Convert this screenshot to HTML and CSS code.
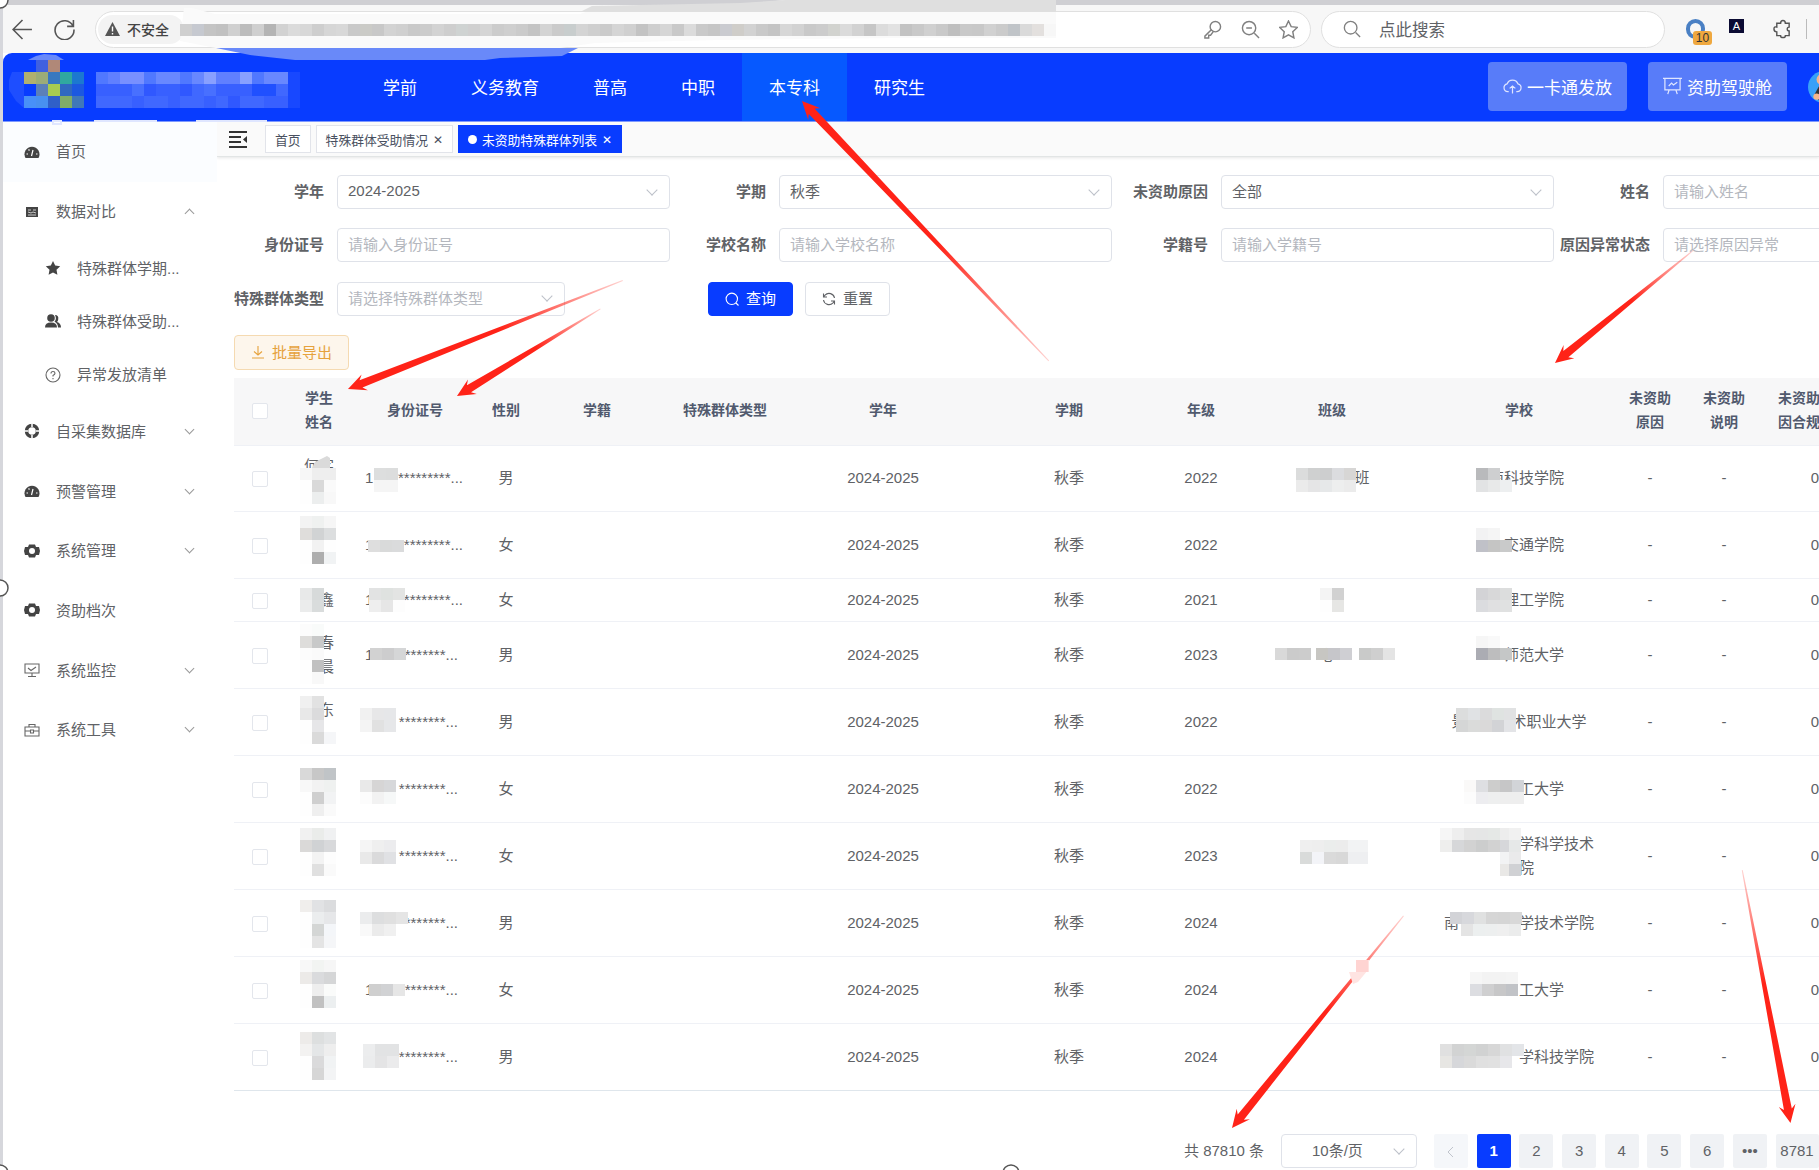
FILE: index.html
```
<!DOCTYPE html>
<html lang="zh-CN">
    <head>
        <meta charset="UTF-8" />
        <meta name="viewport" content="width=device-width, initial-scale=1.0" />
        <title>未资助特殊群体列表</title>
        <link rel="stylesheet" href="styles.css">
    </head>
    <body>
        <div class="browser">
            <svg class="navIcon back" viewBox="0 0 20 20"><path d="M19 10H1M10 1L1 10l9 9" /></svg>
            <svg class="navIcon reload" viewBox="0 0 20 20"><path d="M18 6.5A9 9 0 1 0 19 10M18.5 1v6h-6" /></svg>
            <div class="address">
                <span class="unsafe">
                    <svg width="15" height="14" viewBox="0 0 15 14"><path d="M7.5 0L15 14H0z" fill="#555" /><path d="M7.5 4.5v5M7.5 11v1.5" stroke="#fff" stroke-width="1.4" /></svg>
                    不安全
                </span>
                <div class="addressIcons">
                    <svg viewBox="0 0 20 20"><circle cx="13" cy="7" r="5.5" /><path d="M9 10l-7 7v2h4v-3h2l3-4" /></svg>
                    <svg viewBox="0 0 20 20"><circle cx="8.5" cy="8.5" r="7" /><path d="M14 14l5 5M5.5 8.5h6" /></svg>
                    <svg viewBox="0 0 20 20"><path d="M10 1l2.8 6 6.4.8-4.7 4.5 1.2 6.5L10 15.6l-5.7 3.2 1.2-6.5L.8 7.8 7.2 7z" /></svg>
                </div>
            </div>
            <div class="searchBox">
                <svg viewBox="0 0 20 20"><circle cx="8.5" cy="8.5" r="7" /><path d="M14 14l5 5" /></svg>
                点此搜索
            </div>
            <div class="extensions">
                <div class="ext extRing"><span class="badge">10</span></div>
                <div class="ext extDark">A</div>
                <svg class="ext" viewBox="0 0 20 20"><path d="M4 4h4q0-3 2.500-3T13 4h4v4q-2 0-2 2t2 2v5h-4q0 2-2.500 2T8 17H4v-4q-3 0-3-3t3-2z" /></svg>
                <span class="line"></span>
            </div>
        </div>

        <div class="header">
            <div class="nav">
                <a>学前</a><a>义务教育</a><a>普高</a><a>中职</a><a class="current">本专科</a><a>研究生</a>
            </div>
            <div class="headerBtns">
                <button class="headBtn">
                    <svg viewBox="0 0 20 18"><path d="M6 15H5a4.2 4.2 0 0 1-.6-8.3 6 6 0 0 1 11.3 0A4.2 4.2 0 0 1 15 15h-1M10 17V9M7 11.5L10 9l3 2.5" /></svg>一卡通发放
                </button>
                <button class="headBtn">
                    <svg viewBox="0 0 20 18"><path d="M0 1h20M2 1v12h16V1M6 9l3-3 2 2 4-3M6.5 13L5 17.5M13.5 13l1.5 4.5" /></svg>资助驾驶舱
                </button>
                <svg class="avatar" viewBox="0 0 30 30"><circle cx="15" cy="15" r="15" fill="#38a0f8" /><circle cx="13" cy="8" r="5" fill="#f5b58c" /><path d="M6 22l5-9h10v17h-9z" fill="#333" /><circle cx="8" cy="24" r="3" fill="#f5b58c" /></svg>
            </div>
        </div>

        <div class="container">
            <div class="sidebar" id="sidebar"></div>
            <div class="main">
                <div class="tagBar">
                    <svg class="fold" viewBox="0 0 18 17"><path d="M0 1h18M0 6h12M0 11h12M0 16h18" stroke="#333" stroke-width="2" /><path d="M18 5v7l-4-3.5z" fill="#333" /></svg>
                    <span class="tag">首页</span>
                    <span class="tag">特殊群体受助情况<i>✕</i></span>
                    <span class="tag on"><b></b>未资助特殊群体列表<i>✕</i></span>
                </div>
                <div class="content">
                    <div class="formRow">
                        <label>学年</label><div class="input select filled">2024-2025</div>
                        <label>学期</label><div class="input select filled">秋季</div>
                        <label>未资助原因</label><div class="input select filled">全部</div>
                        <label>姓名</label><div class="input">请输入姓名</div>
                    </div>
                    <div class="formRow">
                        <label>身份证号</label><div class="input">请输入身份证号</div>
                        <label>学校名称</label><div class="input">请输入学校名称</div>
                        <label>学籍号</label><div class="input">请输入学籍号</div>
                        <label>原因异常状态</label><div class="input">请选择原因异常</div>
                    </div>
                    <div class="formRow">
                        <label>特殊群体类型</label><div class="input select short">请选择特殊群体类型</div>
                        <button class="btn primary"><svg viewBox="0 0 14 14"><path d="M11 11l2.5 2.5M12.5 6.800a5.700 5.700 0 1 0-11.400 0 5.700 5.700 0 0 0 11.400 0z" /></svg>查询</button>
                        <button class="btn"><svg viewBox="0 0 14 14"><path d="M12.5 6A5.5 5.5 0 0 0 3 3.2L1.5 5M1.5 1.5V5H5M1.5 8A5.5 5.5 0 0 0 11 10.8L12.5 9M12.5 12.5V9H9" /></svg>重置</button>
                    </div>
                    <button class="btn export"><svg viewBox="0 0 14 14"><path d="M7 1v9M3 6.5L7 10l4-3.5M1 13h12" /></svg>批量导出</button>

                    <table>
                        <colgroup>
                            <col class="c52"><col class="c66"><col class="c126"><col class="c56"><col class="c126"><col class="c130"><col class="c186"><col class="c186"><col class="c78"><col class="c184"><col class="c190"><col class="c72"><col class="c76"><col class="c106">
                        </colgroup>
                        <thead>
                            <tr>
                                <th><span class="check"></span></th><th>学生<br>姓名</th><th>身份证号</th><th>性别</th><th>学籍</th><th>特殊群体类型</th><th>学年</th><th>学期</th><th>年级</th><th>班级</th><th>学校</th><th>未资助<br>原因</th><th>未资助<br>说明</th><th class="cut">未资助<br>因合规</th>
                            </tr>
                        </thead>
                        <tbody id="rows"></tbody>
                    </table>

                    <div class="pager">
                        <span class="total">共 87810 条</span>
                        <div class="input select size">10条/页</div>
                        <span class="page prev"><svg viewBox="0 0 14 14"><path d="M9 2L4 7l5 5" /></svg></span>
                        <span class="page now">1</span>
                        <span class="page">2</span>
                        <span class="page">3</span>
                        <span class="page">4</span>
                        <span class="page">5</span>
                        <span class="page">6</span>
                        <span class="page">•••</span>
                        <span class="page">8781</span>
                    </div>
                </div>
            </div>
        </div>

        <svg class="marks" id="marks" viewBox="0 0 1819 1170">
            <polygon points="184,8 192,8 215,14 580,14 605,5 740,5 785,0 1056,0 1056,38 900,38 720,40 595,43 560,48 216,48 180,41" fill="#fafafa" />
            <polygon points="592,6 740,3 785,0 1056,0 1056,12 580,12" fill="#dfdfdf" />
            <polygon points="216,48 578,48 562,56 500,58 485,60 295,60 250,55" fill="#6989f9" />
            <polygon points="28,60 36,56 44,54 56,55 64,60" fill="#6989f9" />
            <polygon points="12,72 24,72 24,108 16,101 9,90 9,80" fill="#1e4eff" />
            <path d="M53 121h8v3h-8zM94 121h63M196 121h71" stroke="#dfe6ff" stroke-width="2" />
        </svg>

        <script>
            const icons = {
                gauge: '<path d="M1.500 14A7.500 7.500 0 1 1 14.500 14z" fill="#444"/><path d="M7.500 12l1.500-6M2.500 10H4M12 10h1.500M4.500 5.500l1 1" stroke="#fff" stroke-width="1.200"/>',
                form: '<path d="M2 3h12v10H2z" fill="#444"/><path d="M4 6h3M9 6h3M4 8l3 1 2-1 3 1M4 11h8" stroke="#ccc"/>',
                star: '<path d="M8 1l2.2 4.6 5 .7-3.7 3.5.9 5L8 12.4l-4.4 2.4.9-5L.8 6.3l5-.7z" fill="#444"/>',
                people: '<circle cx="6" cy="5" r="3.8" fill="#444"/><path d="M0 14.500q0-5 6-5t6 5zM10 2q4 0 3.200 4.500Q13 8 12 9q4 1 4 5.500h-3q0-4-3.500-6Q12 6 10 2z" fill="#444"/>',
                help: '<circle cx="8" cy="8" r="7" class="s"/><path d="M6 6.5Q6 4.5 8 4.5t2 1.8Q10 7.5 8 8.5v1M8 11v1.3" class="s"/>',
                ring: '<circle cx="8" cy="8" r="5.5" fill="none" stroke="#444" stroke-width="3.5"/><path d="M8 0v4M8 12v4M0 8h4M12 8h4" stroke="#fff" stroke-width="1.5"/>',
                gear: '<path d="M5 1.500h6l1 2.500 3 0 1 4-1 4h-3l-1 2.500H5L4 12H1L0 8l1-4h3z" fill="#444"/><circle cx="8" cy="8" r="3" fill="#fff"/>',
                monitor: '<path d="M1 2h14v9H1zM8 11v3M4 14.5h8M4 6l3 2.5L12 5" class="s"/>',
                tool: '<path d="M1 5h14v9H1zM5 5V2.5h6V5M1 9h5M10 9h5M6.5 8h3v3h-3z" class="s"/>'
            };

            const menu = [
                ["gauge", "首页", "home"],
                ["form", "数据对比", "up"],
                ["star", "特殊群体学期...", "sub"],
                ["people", "特殊群体受助...", "sub"],
                ["help", "异常发放清单", "sub"],
                ["ring", "自采集数据库", "down"],
                ["gauge", "预警管理", "down"],
                ["gear", "系统管理", "down"],
                ["gear", "资助档次", ""],
                ["monitor", "系统监控", "down"],
                ["tool", "系统工具", "down"]
            ];
            document.getElementById("sidebar").innerHTML = menu
                .map((m) => `<div class="menuItem ${m[2]}"><svg viewBox="0 0 16 16">${icons[m[0]]}</svg><span>${m[1]}</span></div>`)
                .join("");

            // 姓名, 证号前缀, 星号, 性别, 年级, 班级, 学校, 行样式
            const data = [
                ["何字<br>　", "1", 9, "男", 2022, "　　　　班", "　南科技学院", "first"],
                ["", "1", 8, "女", 2022, "", "　　交通学院", "tall"],
                ["　鑫", "1", 8, "女", 2021, "", "　　理工学院", "low"],
                ["　春<br>　晨", "1", 7, "男", 2023, "　　心　　2　　", "　　师范大学", "tall"],
                ["　东<br>　", "", 8, "男", 2022, "", "景　　　术职业大学", "tall"],
                ["", "", 8, "女", 2022, "", "　　　工大学", "tall"],
                ["", "", 8, "女", 2023, "", "　　　　　学科学技术<br>　院", "tall"],
                ["", "", 7, "男", 2024, "", "南　　　　学技术学院", "tall"],
                ["", "1", 7, "女", 2024, "", "　　　工大学", "tall"],
                ["", "", 8, "男", 2024, "", "　　　　　学科技学院", "tall"]
            ];
            document.getElementById("rows").innerHTML = data
                .map((r, i) => `<tr class="${r[7]}"><td><span class="check"></span></td><td class="name">${r[0]}</td>
                    <td><div class="idNo ${i > 2 ? "narrow" : ""}"><span>${r[1]}</span><span>${"*".repeat(r[2])}...</span></div></td>
                    <td>${r[3]}</td><td></td><td></td><td>2024-2025</td><td>秋季</td><td>${r[4]}</td>
                    <td>${r[5]}</td><td>${r[6]}</td><td>-</td><td>-</td><td>0</td></tr>`)
                .join("");

            const marks = document.getElementById("marks");
            let svg = "";

            // 打码色块，每格 12px，"-" 为空
            function mosaic(x, y, lines) {
                lines.forEach((line, j) => {
                    line.split(" ").forEach((c, i) => {
                        if (c === "-") return;
                        const color = c.length === 2 ? c + c + c : c;
                        svg += `<rect x="${x + i * 12}" y="${y + j * 12}" width="12" height="12" fill="#${color}"/>`;
                    });
                });
            }

            // 地址栏
            mosaic(180, 24, ["cf c6c9d0 c4 c1 d0 bc cf b4 d2 db d8 ce d6 d8 c9 cbcbc7 c8 d3 d0 c9 cc d3 ce cfd3d2 d0 d5 cc cf cb c4 d4 cb c8cdcd d4 cf cb d5 d0 c3 ce d6 c9 db c9 c5 cacbd0 cfcdc9 d2 c9 c4 d7 d2 c9 cc d2d3cf db d2 c6 dc e2 c3 c9 d0 c9 bf c9 c8 d1 cb c0c4c8 da e3e0de f7"]);
            mosaic(36, 60, ["4060e0 b08878"]);
            mosaic(24, 72, ["b0b070 9cac78 3878c0 30a8a0 1c78d0", "083cff 5c80b8 a8cc50 3068c0 1c58e0", "4890f8 4890f0 3060c8 80ac68 4078b8"]);
            mosaic(96, 72, [
                "5078ff 6080ff 7890ff 7890ff 5078ff 6888ff 6888ff 5078ff 6888ff 88a0ff 6080ff 6080ff 88a0ff 5078ff 6888ff 6888ff 1848ff",
                "3860ff 3860ff 3860ff 4870ff 3058ff 3860ff 3860ff 3058ff 4068ff 4870ff 3860ff 3860ff 3860ff 2050ff 2050ff 4068ff 1848ff",
                "4068ff 4068ff 4068ff 3860ff 4068ff 4068ff 3860ff 4068ff 4068ff 3860ff 4068ff 3058ff 4068ff 4068ff 3860ff 3860ff 1848ff"
            ]);

            // 姓名
            mosaic(300, 468, ["f7 ee ee", "fe d9 fa", "fe eceeee f8"]);
            svg += '<path d="M312 468l3-6 12-6 3 2v10z" fill="#dadada"/>';
            mosaic(300, 516, ["f3 eff1f0 f6", "dfdddb d1d3d4 dcdedf", "fe f2 fe", "fe ae f1f3f4"]);
            mosaic(300, 588, ["e8e9e9 d7dada", "ebecec d9dcdc"]);
            mosaic(300, 624, ["fc f9fbfa", "dedddb c8c9c9", "fc fa", "fe c1c1c1", "fe f8"]);
            mosaic(300, 696, ["f0 e2", "e8e8e8 dbdbdc", "fe e6e6e8", "fe dadada f5f6f8"]);
            mosaic(300, 768, ["d9 c7c7c7 c0c4c7", "f8 f2 eff1f0", "fe cf f2f3f4", "fe ef fa"]);
            mosaic(300, 828, ["f1 eaecea f0f1f2", "dad9d8 d0d2d4 d8d9db", "fe f3 fd", "fe e0 fa"]);
            mosaic(300, 900, ["f0eeec e1e2e4 dbdcde", "fe ebedee e6e7e9", "fe d4d6d5 f4f6f9", "fe e4 f5f6f8"]);
            mosaic(300, 960, ["f8 f2f4f2 f6", "eceae8 dadbdd d5d6d7", "fe ee fafbfa", "fe c1 eceff0"]);
            mosaic(300, 1032, ["edebe9 dddfdf e2e4e5", "f3f2f1 e4e6e7 ee", "fe dadadb f1f3f4", "fe d6 f3f4f5"]);

            // 身份证号
            mosaic(374, 468, ["dddede dcdddd", "f5 f5"]);
            mosaic(368, 540, ["dedede d9dada dadbdc"]);
            mosaic(369, 588, ["e2e3e3 dfe2e0 e3e4e3", "eeeeee e6 fd"]);
            mosaic(370, 648, ["d2d2d2 cdcdce d5d6d7"]);
            mosaic(360, 708, ["f1 e7e7e8 e6e7e9", "f4 e1 e6e7e9"]);
            mosaic(360, 780, ["e9 d6d5d5 d7d8da", "fc f2 f6f8f8"]);
            mosaic(360, 840, ["f5 ef ececee", "e9 dadadb e0e1e4"]);
            mosaic(360, 912, ["ebeced dddedf e0 e5", "f9 ebebeb f0"]);
            mosaic(369, 984, ["cfcfcf d1d2d4 e6"]);
            mosaic(363, 1044, ["ecedee e2e3e4 e2e3e4", "ebeced e4e4e5 ebebec"]);

            // 班级
            mosaic(1296, 468, ["dbdcdc cfd0d0 cdcecf dbdcdf d7d6d5", "eb e5e5e6 e6e8e9 edeeee eb"]);
            mosaic(1320, 588, ["f4 d1", "fe e6e6e4"]);
            mosaic(1275, 648, ["d9 cb cc"]);
            mosaic(1316, 648, ["c7c6c2 c6c6ca cfcfd3"]);
            mosaic(1359, 648, ["c9cac9 cf e4"]);
            mosaic(1300, 840, ["ef ee ebedec ec f2f3f4", "d9dbda f3f4f8 dadada d8 eeeff1"]);
            mosaic(1356, 840, ["f2f3f4", "eeeff1"]);

            // 学校
            mosaic(1476, 468, ["b9babc cecfd0", "e2e3e4 e8e9e9 edeff0"]);
            mosaic(1476, 528, ["f2f2f3 f5", "c0c1c8 c5c5c4 c9caca"]);
            mosaic(1476, 588, ["d3d3d6 d8d8d9 dcdddd", "dbdcdf e0e0e1 e0e1e1"]);
            mosaic(1476, 636, ["f6 f9", "abacb3 bdbdbe c5c7c7"]);
            mosaic(1456, 708, ["dcdddd e0e2e4 dbdbdc dfe3e1 e1e2e3", "d5d6d6 dadbda dad9d9 d2d3d6 e3e4e7"]);
            mosaic(1464, 780, ["faf9f8 dedfe2 cdcdcc c6c6c7 d2d4d8", "fc ededf0 eeefef ee ee"]);
            mosaic(1440, 828, ["f6 ee e6e6e6 e5e6e6 e5e8e6 ed", "eeeeed d6d7d9 d2 cccdcd d2 d6d7da", "- - - - - f2f3f4", "- - - - - e9e8e6"]);
            mosaic(1509, 828, ["f1", "e6e8e8", "eaeaeb", "d0d1d4"]);
            mosaic(1450, 912, ["d2d3d7 d7d8dc e0e1e1 d6 d5 d8"]);
            mosaic(1461, 924, ["e4e4e4 ecefef edefef ef ebecec"]);
            mosaic(1470, 972, ["f6 f3 f3 f4", "dcdde1 cfcfd0 c7c7c8 c1c3c7"]);
            mosaic(1440, 1044, ["e0 d2d3d3 d4d6d5 d1d2d2 d7d7d7 e0e1e2 e3e5e8", "e7e6e3 d6d7da dadada e0 e1 e7e7ea"]);

            // 红色箭头：尖端 -> 尾端
            function arrow(x1, y1, x2, y2) {
                const len = Math.hypot(x2 - x1, y2 - y1) + 4;
                const deg = (Math.atan2(y2 - y1, x2 - x1) * 180) / Math.PI;
                const id = "fade" + Math.round(x1);
                svg += `<linearGradient id="${id}" gradientUnits="userSpaceOnUse" x1="0" y1="0" x2="${len}" y2="0">
                    <stop offset=".55" stop-color="#ff2318"/><stop offset="1" stop-color="#ff2318" stop-opacity=".2"/></linearGradient>
                    <path transform="translate(${x1} ${y1}) rotate(${deg})" d="M0 0L18-8.500L14-4L${len}-.5V.5L14 4L18 8.500z" fill="url(#${id})"/>`;
            }
            arrow(802, 101, 1046, 358);
            arrow(348, 389, 619, 282);
            arrow(457, 396, 597, 311);
            arrow(1555, 363, 1690, 253);
            arrow(1232, 1128, 1401, 919);
            arrow(1790.5, 1123, 1743, 874);
            svg += '<path d="M1368 948v12h1v12h-20l4 12 5-2 10-12z" fill="#ffe4e2"/><rect x="1356" y="960" width="12" height="12" fill="#ffd4d2"/>';

            // 选区边框与控制点
            svg += '<path d="M1.5 0v1170" stroke="#d6d7dc" stroke-width="3"/>';
            [[0, 0], [0, 588], [0, 1173], [1011, 1173]].forEach((p) => {
                svg += `<circle cx="${p[0]}" cy="${p[1]}" r="8" fill="#fff" stroke="#555" stroke-width="1.5"/>`;
            });
            marks.innerHTML += svg;
        </script>
    </body>
</html>
```
FILE: styles.css
```
*,
*::before,
*::after {
    box-sizing: border-box;
}

html,
body {
    margin: 0;
    padding: 0;
    height: 1170px;
    overflow: hidden;
}

body {
    position: relative;
    width: 1819px;
    font-family: "Liberation Sans", "Noto Sans CJK SC", sans-serif;
    font-size: 15px;
    color: #606266;
    background: #fff;
}

svg {
    fill: none;
    flex-shrink: 0;
}

button {
    font-family: inherit;
    font-size: 15px;
}

/* 浏览器工具栏 */
.browser {
    display: flex;
    align-items: center;
    height: 53px;
    padding-left: 12px;
    border-top: 5px solid #cfcfd3;
    background: #f7f7f7;
    overflow: hidden;
}

.browser svg {
    stroke: #808080;
    stroke-width: 1.5;
}

.browser .navIcon {
    width: 21px;
    height: 21px;
    stroke: #555;
    margin-right: 21px;
}

.browser .reload {
    margin-right: 20px;
}

.address,
.searchBox {
    display: flex;
    align-items: center;
    height: 37px;
    border-radius: 19px;
    border: 1px solid #e0e0e0;
    background: #fff;
}

.address {
    width: 1216px;
    padding-left: 2px;
    justify-content: space-between;
}

.unsafe {
    display: flex;
    align-items: center;
    gap: 7px;
    width: 86px;
    height: 29px;
    padding-left: 7px;
    border-radius: 15px;
    background: #f3f3f3;
    font-size: 14px;
    font-weight: 500;
    white-space: nowrap;
    color: #444;
}

.browser .unsafe svg {
    stroke: none;
}

.addressIcons {
    display: flex;
    gap: 19px;
    padding-right: 12px;
}

.addressIcons svg {
    width: 19px;
    height: 19px;
}

.searchBox {
    width: 344px;
    margin-left: 10px;
    padding-left: 21px;
    font-size: 16.5px;
}

.searchBox svg {
    width: 18px;
    height: 18px;
    margin-right: 18px;
}

.extensions {
    display: flex;
    align-items: center;
    margin-left: 21px;
}

.ext {
    position: relative;
    width: 19px;
    height: 20px;
    margin-right: 24px;
}

.extensions svg.ext {
    stroke: #555;
    margin-right: 14px;
    margin-left: 5px;
}

.extRing {
    border: 4px solid #4a80c4;
    border-radius: 10px;
}

.badge {
    position: absolute;
    left: 3px;
    top: 8px;
    width: 19px;
    height: 14px;
    border-radius: 3px;
    background: #efa83f;
    color: #333;
    font-size: 12px;
    line-height: 14px;
    text-align: center;
}

.extDark {
    width: 15px;
    height: 14px;
    margin-top: -6px;
    background: #0b0b33;
    color: #fff;
    font-size: 11px;
    line-height: 14px;
    text-align: center;
}

.line {
    width: 1px;
    height: 20px;
    background: #bbb;
}

/* 顶部导航 */
.header {
    display: flex;
    justify-content: space-between;
    height: 69px;
    margin-left: 3px;
    padding-left: 353px;
    border-radius: 9px 0 0 0;
    background: #083cff;
    border-bottom: 1px solid #7e99ff;
    overflow: hidden;
}

.nav {
    display: flex;
}

.nav a {
    padding: 0 27px;
    font-size: 17px;
    line-height: 71px;
    color: #fff;
}

.nav .current {
    background: #0659ff;
}

.headerBtns {
    display: flex;
    align-items: center;
    width: 331px;
    flex-shrink: 0;
    overflow: hidden;
}

.headBtn {
    display: flex;
    align-items: center;
    justify-content: center;
    gap: 5px;
    width: 139px;
    height: 49px;
    margin-top: -2px;
    margin-right: 21px;
    padding: 0;
    border: none;
    border-radius: 4px;
    background: #587cf9;
    color: #fff;
    font-size: 17px;
    flex-shrink: 0;
}

.headBtn svg {
    width: 19px;
    height: 18px;
    stroke: #dfe5ff;
    stroke-width: 1.3;
}

.avatar {
    width: 32px;
    height: 32px;
}

.container {
    display: flex;
    height: 1048px;
}

/* 侧边栏 */
.sidebar {
    width: 217px;
    flex-shrink: 0;
}

.menuItem {
    display: flex;
    align-items: center;
    height: 59.7px;
    padding: 0 21px 2px 24px;
}

.menuItem svg {
    width: 16px;
    height: 16px;
    margin-top: 2px;
    margin-right: 16px;
}

.menuItem .s {
    stroke: #666;
    stroke-width: 1.1;
}

.home {
    background: #fbfdff;
}

.sub {
    height: 53.4px;
    padding-left: 45px;
}

.up::after,
.down::after {
    content: "";
    width: 7px;
    height: 7px;
    margin-left: auto;
    margin-right: 3px;
    border: solid #999;
    border-width: 0 1px 1px 0;
    transform: translateY(-1px) rotate(45deg);
}

.up::after {
    transform: translateY(3px) rotate(225deg);
}

.main {
    flex: 1;
    min-width: 0;
    overflow: hidden;
}

.tagBar {
    display: flex;
    align-items: center;
    height: 35px;
    padding-left: 12px;
    background: #fafafa;
    border-bottom: 1px solid #e2e5e5;
    box-shadow: 0 1px 3px rgba(0, 0, 0, 0.1);
}

.fold {
    width: 18px;
    height: 17px;
    margin-right: 18px;
}

.tag {
    display: flex;
    align-items: center;
    height: 28px;
    padding: 0 9px;
    margin-right: 5px;
    border: 1px solid #e2e4ea;
    background: #fff;
    font-size: 12.8px;
    color: #495060;
    white-space: nowrap;
}

.tag i {
    margin-left: 5px;
    padding-top: 2px;
    font-size: 11.5px;
    font-style: normal;
}

.tag b {
    width: 9px;
    height: 9px;
    margin-right: 5px;
    border-radius: 50%;
    background: #fff;
}

.tag.on {
    border-color: #083cff;
    background: #083cff;
    color: #fff;
}

.content {
    padding: 18px 0 0 17px;
}

/* 查询表单 */
.formRow {
    display: flex;
    width: 1800px;
    height: 34px;
    margin-bottom: 19.3px;
}

.formRow label {
    width: 103px;
    padding-right: 13px;
    font-weight: bold;
    line-height: 34px;
    text-align: right;
    white-space: nowrap;
}

.input {
    display: flex;
    align-items: center;
    justify-content: space-between;
    width: 333px;
    height: 34px;
    margin-right: 6px;
    padding: 0 12px 3px 10px;
    border: 1px solid #dfe2e9;
    border-radius: 4px;
    color: #b4b7be;
}

.filled {
    color: #606266;
}

.short {
    width: 228px;
    margin-right: 143px;
}

.select::after {
    content: "";
    width: 8px;
    height: 8px;
    margin-right: 1px;
    border: solid #bcc0c8;
    border-width: 0 1px 1px 0;
    transform: translateY(-1px) rotate(45deg);
}

.btn {
    display: flex;
    align-items: center;
    justify-content: center;
    gap: 7px;
    width: 85px;
    height: 34px;
    padding: 0 0 2px;
    margin-right: 12px;
    border: 1px solid #dfe2e9;
    border-radius: 4px;
    background: #fff;
    color: #606266;
}

.btn svg {
    width: 14px;
    height: 14px;
    margin-top: 2px;
    stroke: currentColor;
    stroke-width: 1.1;
}

.primary {
    border-color: #083cff;
    background: #083cff;
    color: #fff;
}

.export {
    width: 115px;
    height: 35px;
    margin-bottom: 8px;
    border-color: #f5dab1;
    background: #fdf6ec;
    color: #e6a23c;
}

/* 数据表格 */
table {
    width: 1634px;
    table-layout: fixed;
    border-collapse: collapse;
}

.c52 { width: 52px; }
.c56 { width: 56px; }
.c66 { width: 66px; }
.c72 { width: 72px; }
.c76 { width: 76px; }
.c78 { width: 78px; }
.c106 { width: 106px; }
.c126 { width: 126px; }
.c130 { width: 130px; }
.c184 { width: 184px; }
.c186 { width: 186px; }
.c190 { width: 190px; }

th,
td {
    padding: 0;
    line-height: 24px;
    text-align: center;
    white-space: nowrap;
    border-bottom: 1px solid #eff1f6;
}

th {
    height: 68px;
    padding-bottom: 3px;
    background: #f7f7f8;
    color: #515a6e;
    font-size: 14px;
}

th.cut {
    padding-left: 16px;
    text-align: left;
}

td {
    height: 66px;
}

.first td {
    padding-bottom: 2px;
}

.tall td {
    height: 67px;
}

.low td {
    height: 43px;
}

tbody tr:last-child td {
    border-bottom-color: #dfe6ec;
}

.check {
    display: inline-block;
    width: 16px;
    height: 16px;
    border: 1px solid #e3e6ec;
    border-radius: 2px;
    background: #fff;
    vertical-align: middle;
}

.idNo {
    display: flex;
    justify-content: space-between;
    width: 98px;
    margin-left: 13px;
}

.idNo.narrow {
    width: 93px;
}

/* 分页 */
.pager {
    display: flex;
    width: 1700px;
    padding: 43px 0 0 950px;
}

.total {
    width: 97px;
    line-height: 34px;
}

.pager .size {
    width: 136px;
    margin-right: 17px;
    padding-left: 30px;
    color: #606266;
}

.page {
    width: 34px;
    height: 34px;
    margin-right: 8.7px;
    border-radius: 2px;
    background: #f0f2f5;
    line-height: 34px;
    text-align: center;
    flex-shrink: 0;
}

.page:last-child {
    width: 43px;
}

.page svg {
    width: 14px;
    height: 14px;
    stroke: #c0c4cc;
    vertical-align: middle;
}

.prev {
    background: #f5f7fa;
}

.now {
    background: #083cff;
    color: #fff;
    font-weight: bold;
}

/* 标注层 */
.marks {
    position: absolute;
    left: 0;
    top: 0;
    width: 1819px;
    height: 1170px;
    pointer-events: none;
}
```
